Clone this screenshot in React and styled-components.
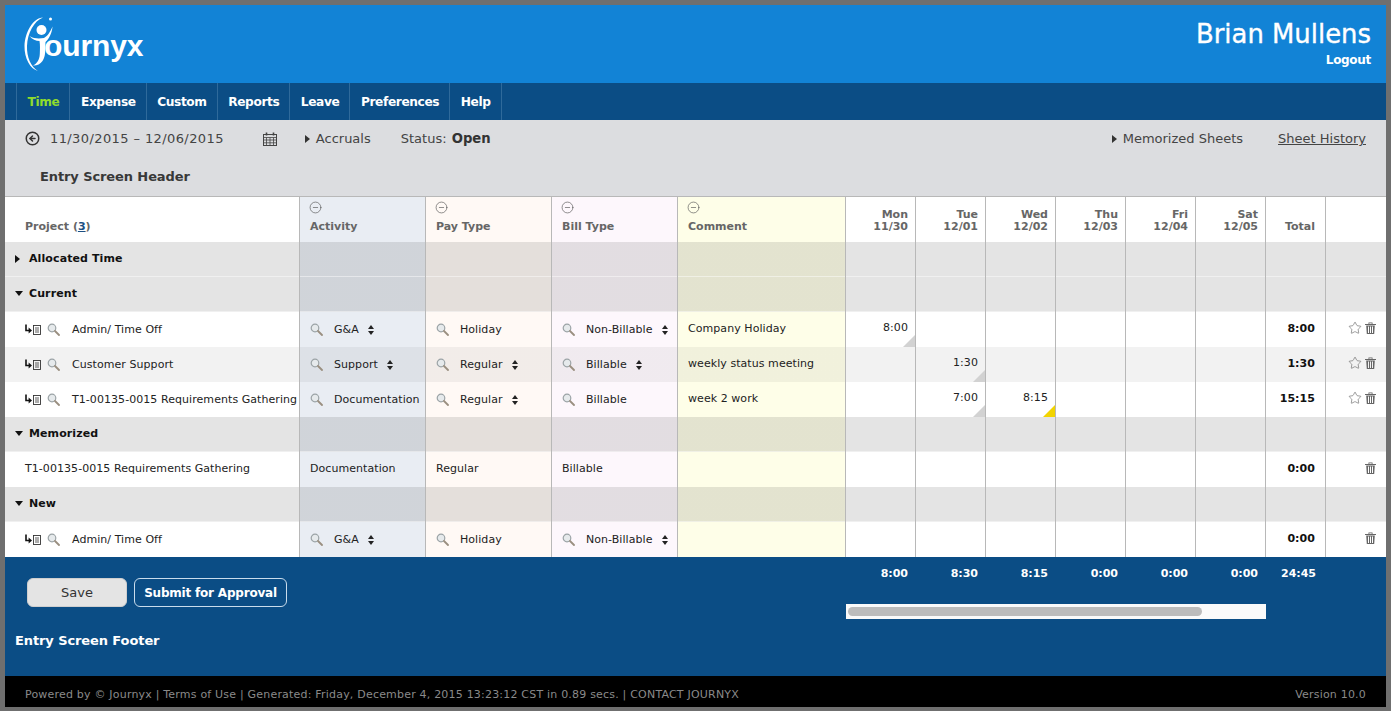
import React from "react";
import styled, { createGlobalStyle } from "styled-components";
import { CircleMinus, CircleArrowLeft, Star } from "lucide-react";

const columns = "294px 126px 126px 126px 168px repeat(6, 70px) 60px 61px";

const tints = {
  activity: "#e9edf3",
  pay: "#fff9f5",
  bill: "#fdf7fc",
  comment: "#fefee8"
};

const shades = {
  group: "rgba(0, 0, 0, 0.105)",
  alt: "rgba(0, 0, 0, 0.05)"
};

const navItems = ["Time", "Expense", "Custom", "Reports", "Leave", "Preferences", "Help"];

const dayHeads = [
  ["Mon", "11/30"],
  ["Tue", "12/01"],
  ["Wed", "12/02"],
  ["Thu", "12/03"],
  ["Fri", "12/04"],
  ["Sat", "12/05"]
];

const totals = ["8:00", "8:30", "8:15", "0:00", "0:00", "0:00"];

const rows = [
  { type: "group", label: "Allocated Time", closed: true },
  { type: "group", label: "Current" },
  {
    type: "entry",
    project: "Admin/ Time Off",
    activity: "G&A",
    pay: "Holiday",
    bill: "Non-Billable",
    comment: "Company Holiday",
    days: { 0: ["8:00", "grey"] },
    total: "8:00",
    star: true,
    sort: ["activity", "bill"]
  },
  {
    type: "entry",
    alt: true,
    project: "Customer Support",
    activity: "Support",
    pay: "Regular",
    bill: "Billable",
    comment: "weekly status meeting",
    days: { 1: ["1:30", "grey"] },
    total: "1:30",
    star: true,
    sort: ["activity", "pay", "bill"]
  },
  {
    type: "entry",
    project: "T1-00135-0015 Requirements Gathering",
    activity: "Documentation",
    pay: "Regular",
    bill: "Billable",
    comment: "week 2 work",
    days: { 1: ["7:00", "grey"], 2: ["8:15", "yellow"] },
    total: "15:15",
    star: true,
    sort: ["pay"]
  },
  { type: "group", label: "Memorized" },
  {
    type: "memo",
    project: "T1-00135-0015 Requirements Gathering",
    activity: "Documentation",
    pay: "Regular",
    bill: "Billable",
    total: "0:00"
  },
  { type: "group", label: "New" },
  {
    type: "entry",
    project: "Admin/ Time Off",
    activity: "G&A",
    pay: "Holiday",
    bill: "Non-Billable",
    total: "0:00",
    sort: ["activity", "bill"]
  }
];

const GlobalStyle = createGlobalStyle`
  html, body {
    margin: 0;
    padding: 0;
    background: #fff;
  }
  body {
    font-family: "DejaVu Sans", Verdana, sans-serif;
    font-size: 11px;
    color: #222;
  }
`;

const Page = styled.div`
  box-sizing: border-box;
  width: 1391px;
  height: 711px;
  padding: 4px 5px;
  background: #6f6f6f;
  overflow: hidden;
`;

const Masthead = styled.header`
  display: flex;
  justify-content: space-between;
  height: 78px;
  padding: 0 15px 0 13px;
  background: #1283d6;
  color: #fff;
  margin-top: 1px;
`;

const Logo = styled.div`
  display: flex;
  align-items: flex-start;
  margin-top: 7px;
`;

const LogoWord = styled.span`
  font-family: "Liberation Sans", Arial, sans-serif;
  font-weight: 700;
  font-size: 30px;
  margin: 17px 0 0 -16px;
  letter-spacing: -0.1px;
`;

const User = styled.div`
  text-align: right;
`;

const UserName = styled.div`
  font-size: 25.9px;
  line-height: 30px;
  margin-top: 14px;
  -webkit-text-stroke: 0.35px #fff;
`;

const Logout = styled.a`
  display: block;
  font-size: 12px;
  font-weight: 700;
  line-height: 16px;
  margin-top: 3px;
  letter-spacing: -0.3px;
`;

const Nav = styled.nav`
  display: flex;
  height: 37px;
  padding-left: 11px;
  background: #0b4d85;
`;

const NavItem = styled.a`
  display: flex;
  align-items: center;
  padding: 0 10px 0 10.5px;
  border-left: 1px solid #2f6a9b;
  font-size: 12.2px;
  font-weight: 700;
  letter-spacing: -0.38px;
  color: ${p => (p.$active ? "#8fdc2c" : "#fff")};
  &:last-child {
    border-right: 1px solid #2f6a9b;
  }
`;

const SubBar = styled.div`
  height: 76px;
  background: #dcdde0;
  color: #444;
  font-size: 13px;
`;

const SubTop = styled.div`
  display: flex;
  align-items: center;
  height: 37px;
  padding: 0 20px;
  svg {
    flex: none;
  }
`;

const DateRange = styled.span`
  margin-left: 10px;
  letter-spacing: 0.4px;
`;

const CalendarSlot = styled.span`
  display: flex;
  margin-left: 39px;
`;

const Toggle = styled.span`
  display: flex;
  align-items: center;
  gap: 6px;
  margin-left: ${p => p.$gap || 0}px;
`;

const Caret = styled.i`
  display: inline-block;
  width: 0;
  height: 0;
  border-style: solid;
  ${p =>
    p.$down
      ? `border-width: 5px 4px 0 4px; border-color: ${p.$color || "#111"} transparent transparent;`
      : `border-width: 4px 0 4px 5px; border-color: transparent transparent transparent ${p.$color || "#111"};`}
`;

const Status = styled.span`
  margin-left: 30px;
  strong {
    margin-left: 1px;
    font-size: 13.2px;
    color: #333;
  }
`;

const Spacer = styled.span`
  flex: 1;
`;

const HistoryLink = styled.a`
  margin-left: 35px;
  text-decoration: underline;
`;

const ScreenHeader = styled.div`
  margin: 12px 0 0 35px;
  font-size: 13px;
  font-weight: 700;
  letter-spacing: -0.1px;
  color: #383838;
`;

const Sheet = styled.div`
  border-top: 1px solid #b8b8b8;
`;

const HeadRow = styled.div`
  display: grid;
  grid-template-columns: ${columns};
  height: 45px;
`;

const HeadCell = styled.div`
  box-sizing: border-box;
  display: flex;
  flex-direction: column;
  justify-content: flex-end;
  align-items: ${p => (p.$right ? "flex-end" : "flex-start")};
  padding: 0 ${p => p.$pr || 7}px 9px ${p => p.$left || 10}px;
  background: ${p => tints[p.$tint] || "#fff"};
  border-left: ${p => (p.$first ? "none" : "1px solid #b8b8b8")};
  font-weight: 700;
  line-height: 12px;
  color: #666;
  text-align: right;
  position: relative;
  svg {
    margin: 0 0 7px -1px;
    color: #555;
  }
  a {
    color: #1b4f83;
    text-decoration: underline;
  }
`;

const Row = styled.div`
  display: grid;
  grid-template-columns: ${columns};
  height: 35px;
`;

const Cell = styled.div`
  box-sizing: border-box;
  position: relative;
  display: flex;
  align-items: center;
  justify-content: ${p => (p.$right ? "flex-end" : "flex-start")};
  padding-top: 0;
  padding-bottom: ${p => p.$raise || 0}px;
  padding-left: ${p => (p.$first ? 20 : 10)}px;
  padding-right: ${p => p.$pr || 0}px;
  border-left: ${p => (p.$first ? "none" : "1px solid #b8b8b8")};
  background: linear-gradient(
      ${p => shades[p.$tone] || "transparent"},
      ${p => shades[p.$tone] || "transparent"}
    ),
    ${p => tints[p.$tint] || "#fff"};
  box-shadow: ${p => (p.$tone === "group" ? "inset 0 -1px 0 rgba(255,255,255,0.45)" : "none")};
  font-weight: ${p => (p.$bold ? 700 : 400)};
  color: ${p => (p.$bold ? "#111" : "#222")};
  letter-spacing: 0.06px;
  white-space: nowrap;
`;

const GroupLabel = styled.div`
  display: flex;
  align-items: center;
  gap: ${p => (p.$closed ? 9 : 6)}px;
  margin: 0 0 2px -10px;
  font-weight: 700;
  color: #111;
  letter-spacing: 0.1px;
`;

const Lookup = styled.span`
  display: flex;
  align-items: center;
  margin-right: ${p => p.$gap || 11}px;
`;

const ProjectLookup = styled(Lookup)`
  margin-right: 12px;
`;

const SortGap = styled.span`
  display: flex;
  margin-left: 9px;
`;

const Flag = styled.i`
  position: absolute;
  right: 0;
  bottom: 0;
  width: 12px;
  height: 12px;
  background: ${p => (p.$yellow ? "#f2d400" : "#d2d2d2")};
  clip-path: polygon(100% 0, 100% 100%, 0 100%);
`;

const Actions = styled.div`
  display: flex;
  gap: 3px;
  margin-left: auto;
  margin-right: 10px;
  align-items: center;
  padding-bottom: 3px;
`;

const FooterBar = styled.div`
  display: flex;
  height: 119px;
  background: #0b4d85;
  color: #fff;
`;

const FooterLeft = styled.div`
  width: 840px;
  padding: 21px 0 0 10px;
  box-sizing: border-box;
`;

const Buttons = styled.div`
  display: flex;
  gap: 7px;
  margin-left: 12px;
`;

const SaveButton = styled.button`
  box-sizing: border-box;
  width: 100px;
  height: 29px;
  border: 1px solid #cfcfcf;
  border-radius: 6px;
  background: #e4e4e4;
  color: #333;
  font: 400 13px "DejaVu Sans", Verdana, sans-serif;
`;

const SubmitButton = styled.button`
  box-sizing: border-box;
  width: 153px;
  height: 29px;
  border: 1px solid #c9dcec;
  border-radius: 6px;
  background: transparent;
  color: #fff;
  font: 700 12px "DejaVu Sans", Verdana, sans-serif;
  letter-spacing: -0.2px;
`;

const FooterTitle = styled.div`
  margin-top: 26px;
  font-size: 13px;
  font-weight: 700;
  letter-spacing: -0.1px;
`;

const TotalsRow = styled.div`
  display: grid;
  grid-template-columns: repeat(6, 70px) 60px;
  height: 32px;
  align-items: center;
  font-weight: 700;
  text-align: right;
`;

const TotalCell = styled.span`
  padding-right: ${p => p.$pr}px;
`;

const ScrollTrack = styled.div`
  box-sizing: border-box;
  width: 420px;
  height: 15px;
  margin: 15px 0 0 1px;
  padding: 3px 2px;
  background: #fafafa;
`;

const ScrollThumb = styled.div`
  height: 9px;
  border-radius: 5px;
  background: #bcbcbc;
`;

const BottomBar = styled.footer`
  display: flex;
  justify-content: space-between;
  align-items: center;
  height: 31px;
  padding: 5px 20px 0;
  box-sizing: border-box;
  background: #000;
  color: #8a8a8a;
  letter-spacing: 0.2px;
`;

const LogoMark = () => (
  <svg width="42" height="62" viewBox="18 12 42 62">
    <path
      d="M43 17.5 C33 18 25 32 24.5 46 C24.3 58 30 69 38 71 C31 67 26.6 57 27 46 C27.5 33 34 21 43 17.5 Z"
      fill="#fff"
    />
    <circle cx="50.5" cy="19" r="1.5" fill="#fff" />
    <circle cx="41.5" cy="30" r="5" fill="#fff" />
    <path
      d="M29.5 36 C34 39 40 38.5 44 38 C48 36 50.5 31 52.5 26.5 C52 33 49 39 45.5 42 C45 50 46 56 42.5 61 C40 64.5 36 66 33 65.5 C37 63.5 39.5 60 39.8 54 C40 49 40.2 45 39.5 41 C36 41 32 39.5 29.5 36 Z"
      fill="#fff"
    />
  </svg>
);

const Calendar = () => (
  <svg width="14" height="14" viewBox="0 0 14 14" fill="none" stroke="#444">
    <rect x="0.5" y="2.5" width="13" height="11" />
    <path d="M0.5 5.5H13.5M0.5 8H13.5M0.5 10.8H13.5M3.5 5.5V13.5M7 5.5V13.5M10.5 5.5V13.5" strokeWidth="0.8" />
    <path d="M3.5 0.5V3.5M10.5 0.5V3.5" strokeWidth="1.6" />
  </svg>
);

const Magnifier = () => (
  <svg width="13" height="13" viewBox="0 0 13 13" fill="none">
    <circle cx="5" cy="5" r="3.8" fill="#e6eaec" stroke="#9ba3a6" strokeWidth="1.2" />
    <path d="M8 8L12 12" stroke="#9a8f80" strokeWidth="1.8" strokeLinecap="round" />
  </svg>
);

const SortArrows = () => (
  <svg width="6" height="10" viewBox="0 0 6 10" fill="#222">
    <path d="M3 0L6 4H0ZM3 10L0 6H6Z" />
  </svg>
);

const CopyIcon = () => (
  <svg width="16" height="11" viewBox="0 0 16 11" fill="none">
    <path d="M1 0.5V6.5H4.5" stroke="#111" strokeWidth="1.6" />
    <path d="M3.6 3.4L7 6.5L3.6 9.6Z" fill="#111" />
    <rect x="8.5" y="1.5" width="7" height="9" stroke="#333" strokeWidth="0.9" />
    <path d="M10 4H14M10 6H14M10 8H14" stroke="#333" strokeWidth="0.8" />
  </svg>
);

const TrashIcon = () => (
  <svg width="11" height="12" viewBox="0 0 11 12" fill="#666">
    <path d="M0 2H11V3H0ZM3.5 0.5H7.5V2H6.7V1.3H4.3V2H3.5Z" />
    <path d="M1.2 3.6H9.8L9.2 12H1.8ZM3 4.6V11H4V4.6ZM5 4.6V11H6V4.6ZM7 4.6V11H8V4.6Z" fillRule="evenodd" />
  </svg>
);

const Picker = ({ value, sortable }) => (
  <>
    <Lookup>
      <Magnifier />
    </Lookup>
    {value}
    {sortable && (
      <SortGap>
        <SortArrows />
      </SortGap>
    )}
  </>
);

const DayCells = ({ tone, days = {} }) =>
  dayHeads.map((_, i) => (
    <Cell key={i} $tone={tone} $right $pr={7} $raise={4}>
      {days[i] && days[i][0]}
      {days[i] && <Flag $yellow={days[i][1] === "yellow"} />}
    </Cell>
  ));

const GroupRow = ({ row }) => (
  <Row>
    <Cell $first $tone="group">
      <GroupLabel $closed={row.closed}>
        <Caret $down={!row.closed} />
        {row.label}
      </GroupLabel>
    </Cell>
    <Cell $tone="group" $tint="activity" />
    <Cell $tone="group" $tint="pay" />
    <Cell $tone="group" $tint="bill" />
    <Cell $tone="group" $tint="comment" />
    <DayCells tone="group" />
    <Cell $tone="group" />
    <Cell $tone="group" />
  </Row>
);

const EntryRow = ({ row }) => {
  const tone = row.alt ? "alt" : undefined;
  const sort = row.sort || [];
  const plain = row.type === "memo";
  const lift = plain ? 2 : 0;
  const field = name =>
    plain ? row[name] : <Picker value={row[name]} sortable={sort.includes(name)} />;
  return (
    <Row>
      <Cell $first $tone={tone} $raise={lift}>
        {!plain && (
          <>
            <Lookup $gap={6}>
              <CopyIcon />
            </Lookup>
            <ProjectLookup>
              <Magnifier />
            </ProjectLookup>
          </>
        )}
        {row.project}
      </Cell>
      <Cell $tone={tone} $tint="activity" $raise={lift}>{field("activity")}</Cell>
      <Cell $tone={tone} $tint="pay" $raise={lift}>{field("pay")}</Cell>
      <Cell $tone={tone} $tint="bill" $raise={lift}>{field("bill")}</Cell>
      <Cell $tone={tone} $tint="comment" $raise={2}>{row.comment}</Cell>
      <DayCells tone={tone} days={row.days} />
      <Cell $tone={tone} $right $pr={10} $bold $raise={3}>{row.total}</Cell>
      <Cell $tone={tone}>
        <Actions>
          {row.star && <Star size={14} strokeWidth={1.1} color="#666" />}
          <TrashIcon />
        </Actions>
      </Cell>
    </Row>
  );
};

const App = () => (
  <Page>
    <GlobalStyle />
    <Masthead>
      <Logo>
        <LogoMark />
        <LogoWord>ournyx</LogoWord>
      </Logo>
      <User>
        <UserName>Brian Mullens</UserName>
        <Logout>Logout</Logout>
      </User>
    </Masthead>

    <Nav>
      {navItems.map((item, i) => (
        <NavItem key={item} $active={i === 0}>{item}</NavItem>
      ))}
    </Nav>

    <SubBar>
      <SubTop>
        <CircleArrowLeft size={15} strokeWidth={2.4} color="#333" />
        <DateRange>11/30/2015 – 12/06/2015</DateRange>
        <CalendarSlot>
          <Calendar />
        </CalendarSlot>
        <Toggle $gap={28}>
          <Caret $color="#333" />
          Accruals
        </Toggle>
        <Status>
          Status: <strong>Open</strong>
        </Status>
        <Spacer />
        <Toggle>
          <Caret $color="#333" />
          Memorized Sheets
        </Toggle>
        <HistoryLink>Sheet History</HistoryLink>
      </SubTop>
      <ScreenHeader>Entry Screen Header</ScreenHeader>
    </SubBar>

    <Sheet>
      <HeadRow>
        <HeadCell $first $left={20}>
          <span>
            Project (<a>3</a>)
          </span>
        </HeadCell>
        <HeadCell $tint="activity">
          <CircleMinus size={13} strokeWidth={1.2} />
          Activity
        </HeadCell>
        <HeadCell $tint="pay">
          <CircleMinus size={13} strokeWidth={1.2} />
          Pay Type
        </HeadCell>
        <HeadCell $tint="bill">
          <CircleMinus size={13} strokeWidth={1.2} />
          Bill Type
        </HeadCell>
        <HeadCell $tint="comment">
          <CircleMinus size={13} strokeWidth={1.2} />
          Comment
        </HeadCell>
        {dayHeads.map(([day, date]) => (
          <HeadCell key={day} $right>
            <span>{day}</span>
            <span>{date}</span>
          </HeadCell>
        ))}
        <HeadCell $right $pr={10}>Total</HeadCell>
        <HeadCell />
      </HeadRow>

      {rows.map((row, i) =>
        row.type === "group" ? <GroupRow key={i} row={row} /> : <EntryRow key={i} row={row} />
      )}
    </Sheet>

    <FooterBar>
      <FooterLeft>
        <Buttons>
          <SaveButton>Save</SaveButton>
          <SubmitButton>Submit for Approval</SubmitButton>
        </Buttons>
        <FooterTitle>Entry Screen Footer</FooterTitle>
      </FooterLeft>
      <div>
        <TotalsRow>
          {totals.map((total, i) => (
            <TotalCell key={i} $pr={7}>{total}</TotalCell>
          ))}
          <TotalCell $pr={9}>24:45</TotalCell>
        </TotalsRow>
        <ScrollTrack>
          <ScrollThumb style={{ width: `${(354 / 416) * 100}%` }} />
        </ScrollTrack>
      </div>
    </FooterBar>

    <BottomBar>
      <span>
        Powered by © Journyx | Terms of Use | Generated: Friday, December 4, 2015 13:23:12 CST in 0.89 secs. | CONTACT JOURNYX
      </span>
      <span>Version 10.0</span>
    </BottomBar>
  </Page>
);

export default App;
